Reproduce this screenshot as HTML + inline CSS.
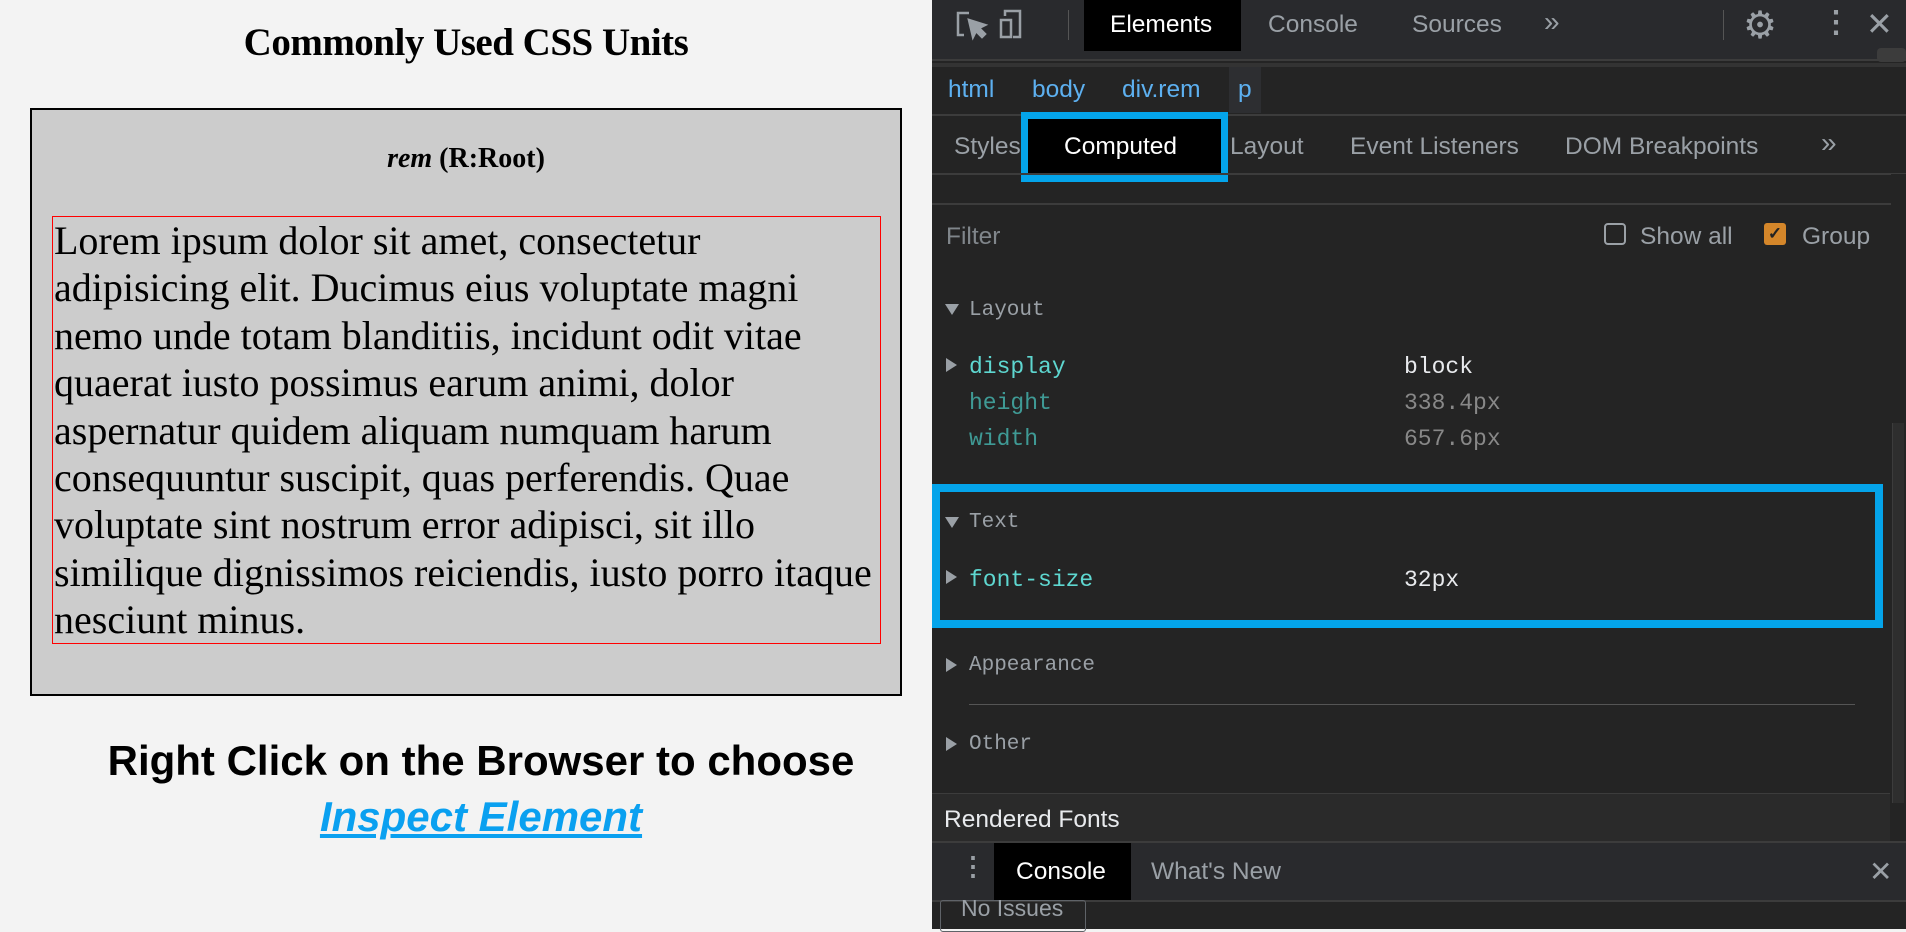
<!DOCTYPE html>
<html><head><meta charset="utf-8"><style>
*{margin:0;padding:0;box-sizing:border-box}
body{width:1906px;height:929px;overflow:hidden;background:#f3f3f3;position:relative;font-family:"Liberation Sans",sans-serif}
.a{position:absolute;white-space:nowrap}
.serif{font-family:"Liberation Serif",serif}
.mono{font-family:"Liberation Mono",monospace}
#dt{position:absolute;left:932px;top:0;width:974px;height:929px;background:#242424;color:#9aa0a6;font-size:24.5px}
.ln{position:absolute;left:0;right:0;height:2px;background:#3c3c3c}
.tri{position:absolute;width:0;height:0}
.dn{border-left:7px solid transparent;border-right:7px solid transparent;border-top:11px solid #9aa0a6}
.rt{border-top:7px solid transparent;border-bottom:7px solid transparent;border-left:11px solid #9aa0a6}
</style></head><body>
<div class="a serif" style="left:0;width:932px;text-align:center;top:20px;font-size:39px;font-weight:bold;letter-spacing:-0.5px">Commonly Used CSS Units</div>
<div class="a" style="left:30px;top:108px;width:872px;height:588px;border:2px solid #000;background:#ccc"></div>
<div class="a serif" style="left:30px;width:872px;text-align:center;top:143px;font-size:28px;font-weight:bold"><i>rem</i> (R:Root)</div>
<div class="a" style="left:52px;top:216px;width:829px;height:428px;border:1.5px solid #f00"></div>
<div class="a serif" style="left:54px;top:217px;width:830px;white-space:normal;font-size:40px;line-height:47.4px;color:#000">Lorem ipsum dolor sit amet, consectetur<br>adipisicing elit. Ducimus eius voluptate magni<br>nemo unde totam blanditiis, incidunt odit vitae<br>quaerat iusto possimus earum animi, dolor<br>aspernatur quidem aliquam numquam harum<br>consequuntur suscipit, quas perferendis. Quae<br>voluptate sint nostrum error adipisci, sit illo<br>similique dignissimos reiciendis, iusto porro itaque<br>nesciunt minus.</div>
<div class="a" style="left:0;width:962px;text-align:center;top:737px;font-size:42px;font-weight:bold;color:#000">Right Click on the Browser to choose</div>
<div class="a" style="left:0;width:962px;text-align:center;top:793px;font-size:42px;font-weight:bold;font-style:italic;color:#0aa0f0;text-decoration:underline">Inspect Element</div>

<div id="dt">
<div class="a" style="left:0;top:0;width:974px;height:59px;background:#292a2d"></div>
<svg class="a" style="left:23px;top:8px" width="80" height="34" viewBox="0 0 80 34" fill="none" stroke="#9aa0a6" stroke-width="2.5"><path d="M14 5H3v22h6"/><path d="M14 12l4 17 3-6 6 6 3-3-6-6 6-3z" fill="#9aa0a6"/><rect x="46" y="12" width="10" height="17"/><path d="M50 8V3h15v26h-7"/></svg>
<div class="a" style="left:136px;top:10px;width:1px;height:30px;background:#555"></div>
<div class="a" style="left:152px;top:0;width:157px;height:51px;background:#000"></div>
<div class="a" style="left:178px;top:11px;color:#fff">Elements</div>
<div class="a" style="left:336px;top:11px">Console</div>
<div class="a" style="left:480px;top:11px">Sources</div>
<div class="a" style="left:612px;top:6px;font-size:28px">»</div>
<div class="a" style="left:791px;top:10px;width:1px;height:30px;background:#555"></div>
<div class="a" style="left:811px;top:3px;font-size:38px;color:#9aa0a6">⚙</div>
<div class="a" style="left:889px;top:5px;font-size:30px;font-weight:bold">⋮</div>
<div class="a" style="left:934px;top:5px;font-size:32px">✕</div>
<div class="ln" style="top:59px"></div>
<div class="a" style="left:0;top:63px;width:974px;height:4px;background:#333"></div>
<div class="a" style="left:945px;top:48px;width:29px;height:14px;background:#3c3c3c;border-radius:4px"></div>
<div class="a" style="left:16px;top:76px;color:#5db0f0">html</div>
<div class="a" style="left:100px;top:76px;color:#5db0f0">body</div>
<div class="a" style="left:190px;top:76px;color:#5db0f0">div.rem</div>
<div class="a" style="left:297px;top:67px;width:32px;height:46px;background:#2d2e31"></div>
<div class="a" style="left:306px;top:76px;color:#5db0f0">p</div>
<div class="ln" style="top:114px"></div>
<div class="a" style="left:22px;top:133px">Styles</div>
<div class="a" style="left:89px;top:112px;width:207px;height:70px;border:7px solid #04a4ea;background:#000"></div>
<div class="a" style="left:132px;top:133px;color:#fff">Computed</div>
<div class="a" style="left:298px;top:133px">Layout</div>
<div class="a" style="left:418px;top:133px">Event Listeners</div>
<div class="a" style="left:633px;top:133px">DOM Breakpoints</div>
<div class="a" style="left:889px;top:127px;font-size:28px">»</div>
<div class="ln" style="top:173px"></div>
<div class="ln" style="top:203px"></div>
<div class="a" style="left:14px;top:223px;color:#80868b">Filter</div>
<div class="a" style="left:672px;top:223px;width:22px;height:22px;border:2px solid #9aa0a6;border-radius:4px"></div>
<div class="a" style="left:708px;top:223px">Show all</div>
<div class="a" style="left:832px;top:223px;width:22px;height:22px;background:#d4862a;border-radius:3px;color:#222;font-size:17px;text-align:center;line-height:22px;font-weight:bold">✓</div>
<div class="a" style="left:870px;top:223px">Group</div>
<div class="tri dn" style="left:13px;top:304px"></div>
<div class="a mono" style="left:37px;top:299px;font-size:21px">Layout</div>
<div class="tri rt" style="left:14px;top:358px"></div>
<div class="a mono" style="left:37px;top:354px;font-size:23px;color:#5ed7d0">display</div>
<div class="a mono" style="left:472px;top:354px;font-size:23px;color:#e8eaed">block</div>
<div class="a mono" style="left:37px;top:390px;font-size:23px;color:#3f9a95">height</div>
<div class="a mono" style="left:472px;top:390px;font-size:23px;color:#888">338.4px</div>
<div class="a mono" style="left:37px;top:426px;font-size:23px;color:#3f9a95">width</div>
<div class="a mono" style="left:472px;top:426px;font-size:23px;color:#888">657.6px</div>
<div class="a" style="left:0;top:484px;width:951px;height:144px;border:8px solid #04a4ea"></div>
<div class="tri dn" style="left:13px;top:517px"></div>
<div class="a mono" style="left:37px;top:511px;font-size:21px">Text</div>
<div class="tri rt" style="left:14px;top:570px"></div>
<div class="a mono" style="left:37px;top:567px;font-size:23px;color:#5ed7d0">font-size</div>
<div class="a mono" style="left:472px;top:567px;font-size:23px;color:#e8eaed">32px</div>
<div class="tri rt" style="left:14px;top:658px"></div>
<div class="a mono" style="left:37px;top:654px;font-size:21px">Appearance</div>
<div class="a" style="left:37px;top:704px;width:886px;height:1px;background:#555"></div>
<div class="tri rt" style="left:14px;top:737px"></div>
<div class="a mono" style="left:37px;top:733px;font-size:21px">Other</div>
<div class="a" style="left:0;top:793px;width:958px;height:48px;background:#2a2a2a;border-top:1px solid #3c3c3c"></div>
<div class="a" style="left:12px;top:806px;color:#e8eaed">Rendered Fonts</div>
<div class="a" style="left:959px;top:174px;width:15px;height:630px;background:#242424"></div>
<div class="a" style="left:960px;top:423px;width:12px;height:380px;background:#2e2e2e;border-left:1px solid #3c3c3c"></div>
<div class="a" style="left:0;top:841px;width:974px;height:59px;background:#292a2d;border-top:2px solid #3c3c3c"></div>
<div class="a" style="left:28px;top:851px;font-size:26px;font-weight:bold">⋮</div>
<div class="a" style="left:62px;top:843px;width:137px;height:57px;background:#000"></div>
<div class="a" style="left:84px;top:858px;color:#fff">Console</div>
<div class="a" style="left:219px;top:858px">What's New</div>
<div class="a" style="left:937px;top:855px;font-size:28px">✕</div>
<div class="a" style="left:0;top:900px;width:974px;height:2px;background:#3c3c3c"></div>
<div class="a" style="left:8px;top:900px;width:146px;height:32px;border:1px solid #5f6368;border-radius:3px;padding-left:20px;line-height:14px;font-size:23px">No Issues</div>
</div>
</body></html>
